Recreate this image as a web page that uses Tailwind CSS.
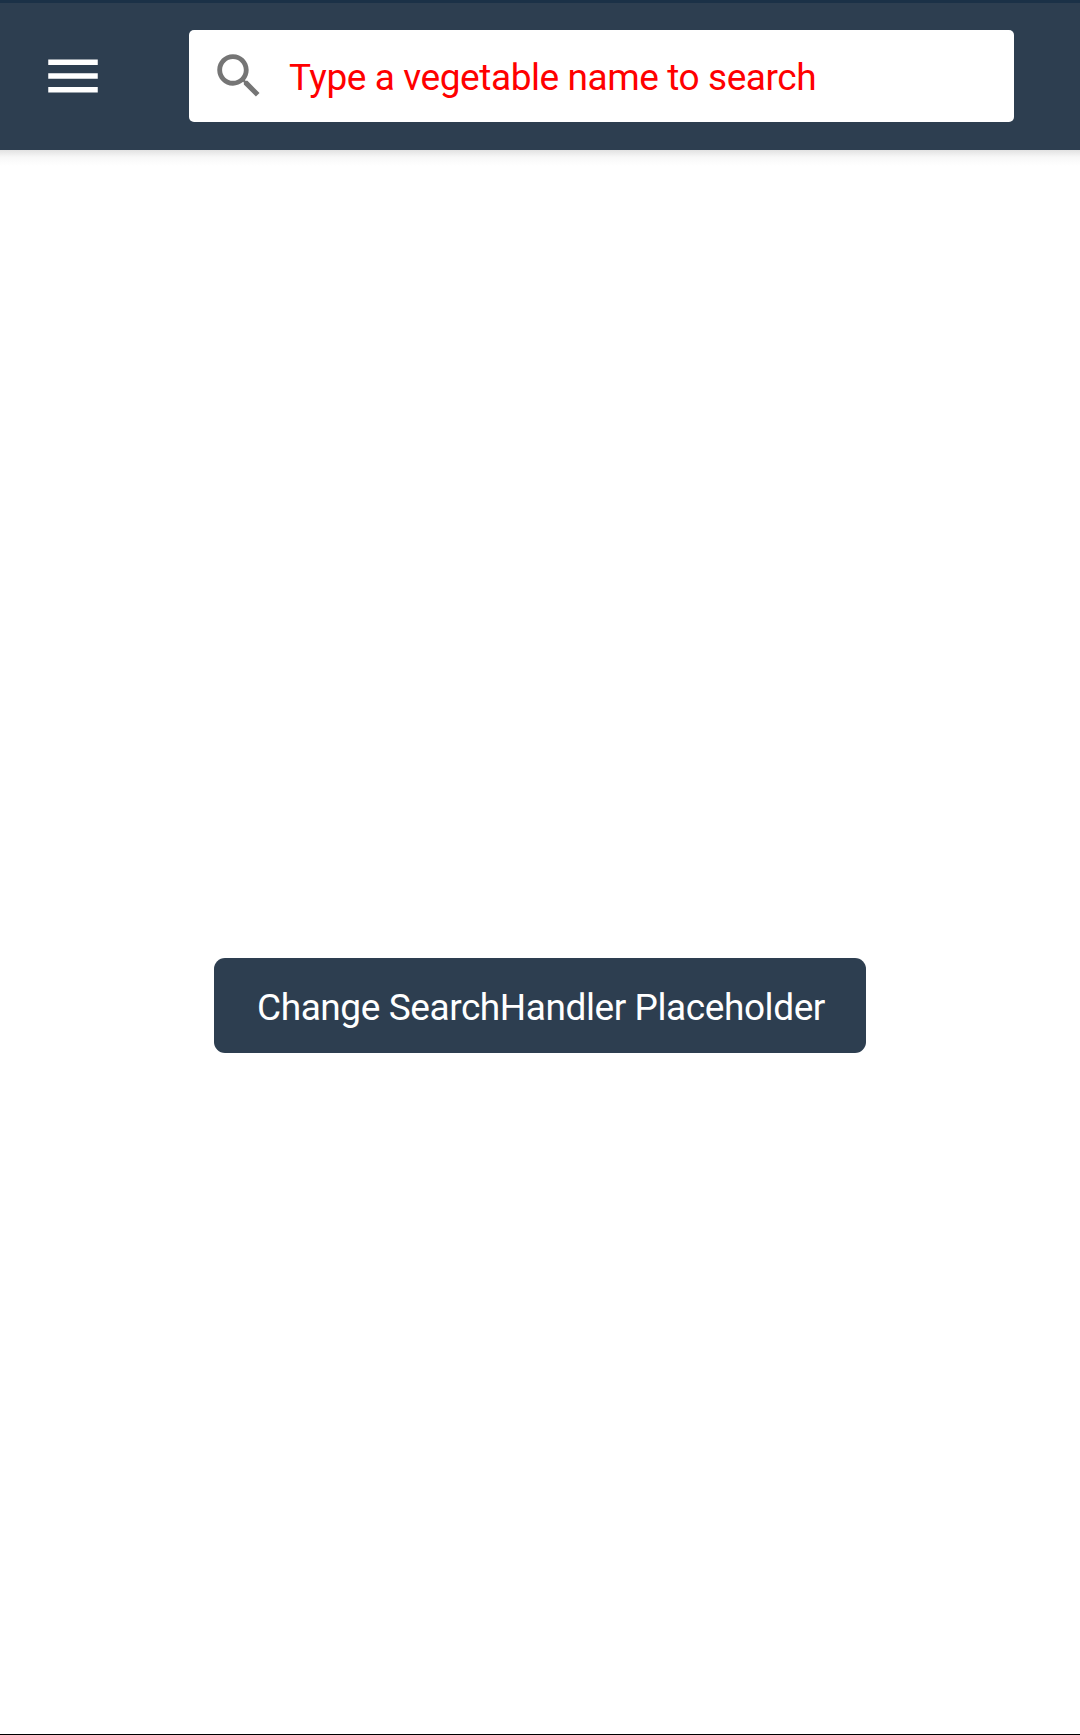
<!DOCTYPE html>
<html lang="en">
<head>
<meta charset="utf-8">
<title>Search</title>
<script src="https://cdn.jsdelivr.net/npm/@tailwindcss/browser@4"></script>
</head>
<body class="flex h-[1735px] w-[1080px] flex-col overflow-hidden border-b border-black bg-white font-['Roboto',sans-serif] text-[37px] tracking-[-0.42px]">
  <header class="flex h-[150px] shrink-0 items-center border-t-[3px] border-[#1b3147] bg-[#2d3e50] pb-[1px] pl-10">
    <button aria-label="Menu" class="size-[66px]">
      <svg viewBox="0 0 24 24" class="size-[66px] fill-white"><path d="M3 18h18v-2H3v2zm0-5h18v-2H3v2zm0-7v2h18V6H3z"/></svg>
    </button>
    <div class="ml-[83px] flex h-[92px] w-[825px] items-center rounded-[5px] bg-white pl-[21px]">
      <svg viewBox="0 0 24 24" class="size-[58px] shrink-0 fill-[#757575]"><path d="M15.5 14h-.79l-.28-.27C15.41 12.59 16 11.11 16 9.5 16 5.91 13.09 3 9.5 3S3 5.91 3 9.5 5.91 16 9.5 16c1.61 0 3.09-.59 4.23-1.57l.27.28v.79l5 4.99L20.49 19l-4.99-5zm-6 0C7.01 14 5 11.99 5 9.5S7.01 5 9.5 5 14 7.01 14 9.5 11.99 14 9.5 14z"/></svg>
      <span class="ml-[21px] whitespace-nowrap pt-1 text-[#ff0000]">Type a vegetable name to search</span>
    </div>
  </header>
  <div class="h-4 shrink-0 bg-linear-to-b from-[#e2e2e2] via-[#f8f8f8] via-45% to-white"></div>
  <main class="flex flex-1 flex-col items-center pt-[792px]">
    <button class="flex h-[95px] w-[652px] items-center justify-center whitespace-nowrap rounded-[11px] bg-[#2d3e50] pt-1 pl-0.5 text-white">Change SearchHandler Placeholder</button>
  </main>
</body>
</html>
